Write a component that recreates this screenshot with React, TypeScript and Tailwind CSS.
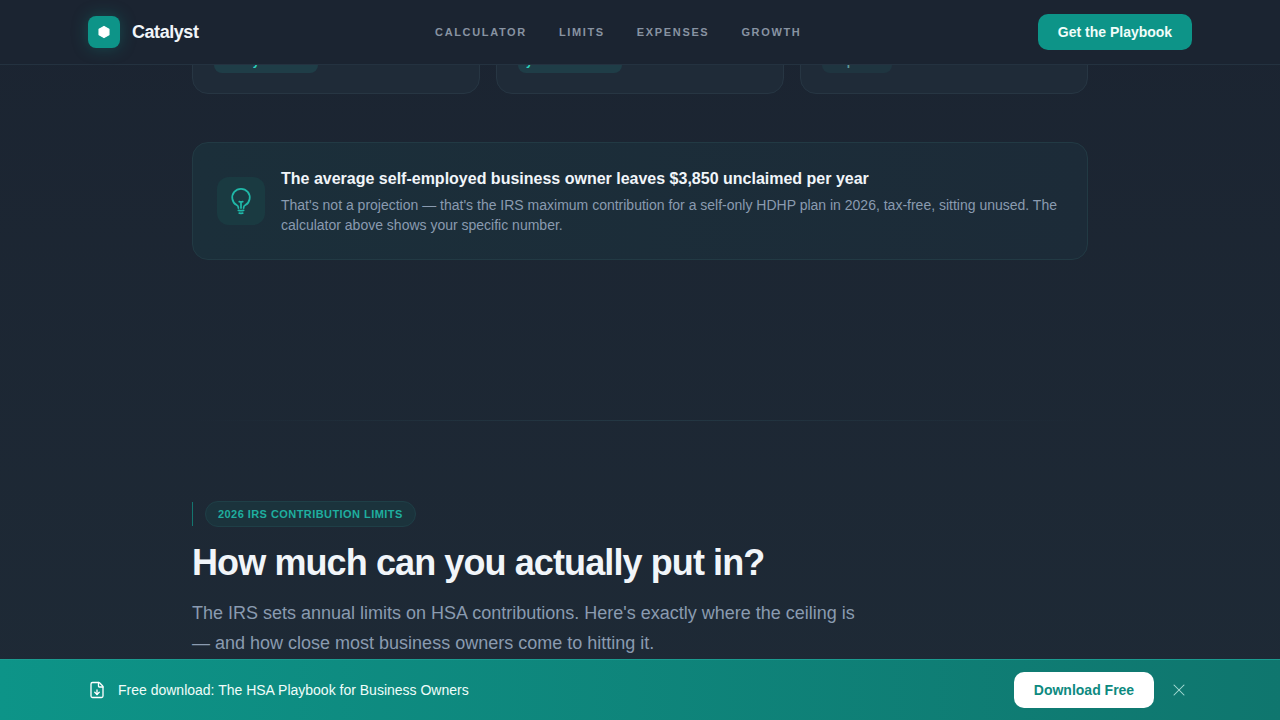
import { FileDown, X } from "lucide-react";
import { HiOutlineLightBulb } from "react-icons/hi2";

const font = { fontFamily: '"Liberation Sans", Arial, sans-serif' };

export default function App() {
  return (
    <div style={font} className="relative h-[720px] w-full overflow-hidden bg-gradient-to-b from-[#1b2431] to-[#1e2a36]">
      <header className="absolute inset-x-0 top-0 z-20 flex h-[65px] items-center justify-between border-b border-[#243240] bg-[#1b2431] px-[88px]">
        <div className="flex items-center gap-3">
          <div className="flex h-8 w-8 items-center justify-center rounded-lg bg-[#0d9488] shadow-[0_0_16px_rgba(13,148,136,0.35)]">
            <svg width="14" height="14" viewBox="0 0 24 24" fill="white" stroke="white" strokeWidth="2" strokeLinejoin="round">
              <path d="M12 2.500 20.500 7.300v9.400L12 21.500 3.500 16.700V7.300Z" />
            </svg>
          </div>
          <span className="text-lg font-bold tracking-tight text-[#f1f5f9]">Catalyst</span>
        </div>
        <nav className="flex items-center gap-8 text-[11px] font-semibold tracking-[0.15em] text-[#8893a2]">
          <span>CALCULATOR</span>
          <span>LIMITS</span>
          <span>EXPENSES</span>
          <span>GROWTH</span>
        </nav>
        <button className="flex h-9 w-[154px] items-center justify-center rounded-[10px] bg-[#0d9488] text-sm font-bold text-[#f0fdfa]">
          Get the Playbook
        </button>
      </header>

      <main className="mx-auto flex w-[896px] flex-col pt-[30px]">
        <div className="flex gap-4">
          <div className="flex h-[64px] flex-1 flex-col justify-end rounded-2xl border border-[#273643] bg-[#1f2b38] px-[21px] pb-[20px]">
            <div className="flex h-8 w-[104px] items-end overflow-hidden rounded-lg bg-[#1f3d47] pb-[4px] pl-[10px] text-xs font-semibold leading-4 text-[#2dd4bf]">Yearly</div>
          </div>
          <div className="flex h-[64px] flex-1 flex-col justify-end rounded-2xl border border-[#273643] bg-[#1f2b38] px-[21px] pb-[20px]">
            <div className="flex h-8 w-[104px] items-end overflow-hidden rounded-lg bg-[#1f3d47] pb-[4px] pl-[8px] text-xs font-semibold leading-4 text-[#2dd4bf]">yes</div>
          </div>
          <div className="flex h-[64px] flex-1 flex-col justify-end rounded-2xl border border-[#273643] bg-[#1f2b38] px-[21px] pb-[20px]">
            <div className="flex h-8 w-[70px] items-end overflow-hidden rounded-lg bg-[#1f3540] pb-[4px] pl-[16px] text-xs font-semibold leading-4 text-[#5f9a9a]">Up</div>
          </div>
        </div>

        <section className="mt-12 flex h-[118px] items-center gap-4 rounded-2xl border border-[#223a44] bg-gradient-to-r from-[#1b2f3a] to-[#1c2b38] px-6">
          <div className="flex h-12 w-12 shrink-0 items-center justify-center rounded-xl bg-[#1a3a41]">
            <HiOutlineLightBulb size={28} className="text-[#20b8a8]" />
          </div>
          <div>
            <h3 className="text-base font-bold leading-6 text-[#f1f5f9]">
              The average self-employed business owner leaves $3,850 unclaimed per year
            </h3>
            <p className="mt-1 text-sm leading-[20.5px] text-[#8a9bb0]">
              That's not a projection — that's the IRS maximum contribution for a self-only HDHP plan in 2026, tax-free, sitting unused. The calculator above shows your specific number.
            </p>
          </div>
        </section>

        <div className="mt-[160px] h-px bg-gradient-to-r from-transparent via-[#243844] to-transparent" />

        <div className="mt-[80px] flex items-center gap-3">
          <div className="h-6 w-px bg-[#14756f]" />
          <span className="flex h-[26px] items-center rounded-full border border-[#1f3f47] bg-[#1b333c] px-3 text-[11px] font-bold tracking-[0.04em] text-[#1fae9f]">
            2026 IRS CONTRIBUTION LIMITS
          </span>
        </div>
        <h2 className="mt-4 text-4xl font-bold leading-10 tracking-tight text-[#f1f5f9]">How much can you actually put in?</h2>
        <p className="mt-[15px] w-[680px] text-lg leading-[30px] text-[#8a9bb0]">
          The IRS sets annual limits on HSA contributions. Here's exactly where the ceiling is — and how close most business owners come to hitting it.
        </p>
      </main>

      <div className="absolute inset-x-0 bottom-0 z-20 flex h-[61px] items-center justify-between border-t border-[#1a9c90] bg-gradient-to-r from-[#0d9488] to-[#0f766e] px-[88px]">
        <div className="flex items-center gap-3">
          <FileDown size={18} strokeWidth={1.75} className="text-white" />
          <span className="text-sm text-[#f0fdfa]">Free download: The HSA Playbook for Business Owners</span>
        </div>
        <div className="flex items-center gap-[15px]">
          <button className="flex h-9 w-[140px] items-center justify-center rounded-[10px] bg-white text-sm font-bold text-[#0d8a7f]">
            Download Free
          </button>
          <X size={20} strokeWidth={1.25} className="mr-[3px] text-[#a8dcd5]" />
        </div>
      </div>
    </div>
  );
}
